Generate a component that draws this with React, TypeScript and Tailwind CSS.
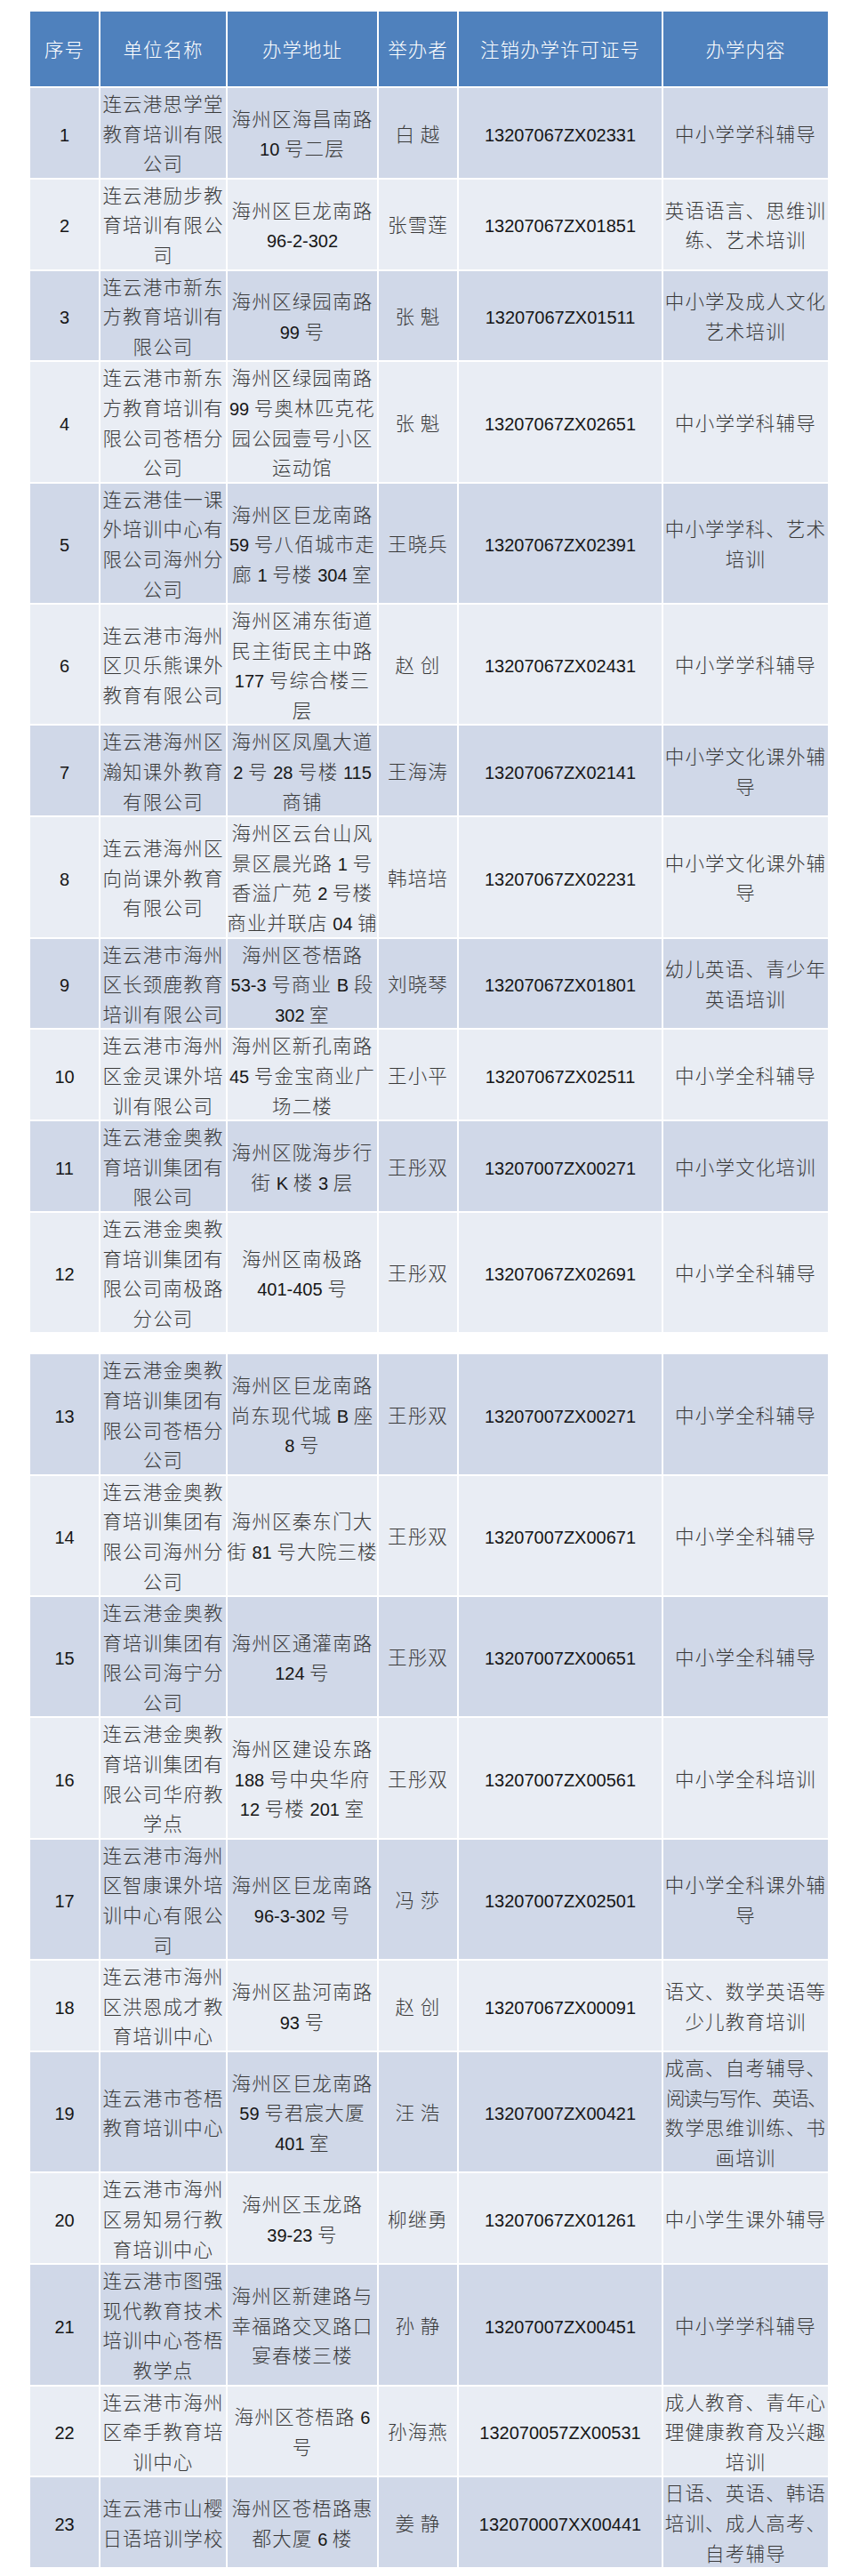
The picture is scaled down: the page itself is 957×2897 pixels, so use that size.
import React from "react";

type Row = {
  n: string;
  name: string;
  addr: string;
  holder: string;
  lic: string;
  content: string;
};

const rowsA: Row[] = [
  { n: "1", name: "连云港思学堂/教育培训有限/公司", addr: "海州区海昌南路/10 号二层", holder: "白 越", lic: "13207067ZX02331", content: "中小学学科辅导" },
  { n: "2", name: "连云港励步教/育培训有限公/司", addr: "海州区巨龙南路/96-2-302", holder: "张雪莲", lic: "13207067ZX01851", content: "英语语言、思维训/练、艺术培训" },
  { n: "3", name: "连云港市新东/方教育培训有/限公司", addr: "海州区绿园南路/99 号", holder: "张 魁", lic: "13207067ZX01511", content: "中小学及成人文化/艺术培训" },
  { n: "4", name: "连云港市新东/方教育培训有/限公司苍梧分/公司", addr: "海州区绿园南路/99 号奥林匹克花/园公园壹号小区/运动馆", holder: "张 魁", lic: "13207067ZX02651", content: "中小学学科辅导" },
  { n: "5", name: "连云港佳一课/外培训中心有/限公司海州分/公司", addr: "海州区巨龙南路/59 号八佰城市走/廊 1 号楼 304 室", holder: "王晓兵", lic: "13207067ZX02391", content: "中小学学科、艺术/培训" },
  { n: "6", name: "连云港市海州/区贝乐熊课外/教育有限公司", addr: "海州区浦东街道/民主街民主中路/177 号综合楼三/层", holder: "赵 创", lic: "13207067ZX02431", content: "中小学学科辅导" },
  { n: "7", name: "连云港海州区/瀚知课外教育/有限公司", addr: "海州区凤凰大道/2 号 28 号楼 115/商铺", holder: "王海涛", lic: "13207067ZX02141", content: "中小学文化课外辅/导" },
  { n: "8", name: "连云港海州区/向尚课外教育/有限公司", addr: "海州区云台山风/景区晨光路 1 号/香溢广苑 2 号楼/商业并联店 04 铺", holder: "韩培培", lic: "13207067ZX02231", content: "中小学文化课外辅/导" },
  { n: "9", name: "连云港市海州/区长颈鹿教育/培训有限公司", addr: "海州区苍梧路/53-3 号商业 B 段/302 室", holder: "刘晓琴", lic: "13207067ZX01801", content: "幼儿英语、青少年/英语培训" },
  { n: "10", name: "连云港市海州/区金灵课外培/训有限公司", addr: "海州区新孔南路/45 号金宝商业广/场二楼", holder: "王小平", lic: "13207067ZX02511", content: "中小学全科辅导" },
  { n: "11", name: "连云港金奥教/育培训集团有/限公司", addr: "海州区陇海步行/街 K 楼 3 层", holder: "王彤双", lic: "13207007ZX00271", content: "中小学文化培训" },
  { n: "12", name: "连云港金奥教/育培训集团有/限公司南极路/分公司", addr: "海州区南极路/401-405 号", holder: "王彤双", lic: "13207067ZX02691", content: "中小学全科辅导" },
];

const rowsB: Row[] = [
  { n: "13", name: "连云港金奥教/育培训集团有/限公司苍梧分/公司", addr: "海州区巨龙南路/尚东现代城 B 座/8 号", holder: "王彤双", lic: "13207007ZX00271", content: "中小学全科辅导" },
  { n: "14", name: "连云港金奥教/育培训集团有/限公司海州分/公司", addr: "海州区秦东门大/街 81 号大院三楼", holder: "王彤双", lic: "13207007ZX00671", content: "中小学全科辅导" },
  { n: "15", name: "连云港金奥教/育培训集团有/限公司海宁分/公司", addr: "海州区通灌南路/124 号", holder: "王彤双", lic: "13207007ZX00651", content: "中小学全科辅导" },
  { n: "16", name: "连云港金奥教/育培训集团有/限公司华府教/学点", addr: "海州区建设东路/188 号中央华府/12 号楼 201 室", holder: "王彤双", lic: "13207007ZX00561", content: "中小学全科培训" },
  { n: "17", name: "连云港市海州/区智康课外培/训中心有限公/司", addr: "海州区巨龙南路/96-3-302 号", holder: "冯 莎", lic: "13207007ZX02501", content: "中小学全科课外辅/导" },
  { n: "18", name: "连云港市海州/区洪恩成才教/育培训中心", addr: "海州区盐河南路/93 号", holder: "赵 创", lic: "13207067ZX00091", content: "语文、数学英语等/少儿教育培训" },
  { n: "19", name: "连云港市苍梧/教育培训中心", addr: "海州区巨龙南路/59 号君宸大厦/401 室", holder: "汪 浩", lic: "13207007ZX00421", content: "成高、自考辅导、/阅读与写作、英语、/数学思维训练、书/画培训" },
  { n: "20", name: "连云港市海州/区易知易行教/育培训中心", addr: "海州区玉龙路/39-23 号", holder: "柳继勇", lic: "13207067ZX01261", content: "中小学生课外辅导" },
  { n: "21", name: "连云港市图强/现代教育技术/培训中心苍梧/教学点", addr: "海州区新建路与/幸福路交叉路口/宴春楼三楼", holder: "孙 静", lic: "13207007ZX00451", content: "中小学学科辅导" },
  { n: "22", name: "连云港市海州/区牵手教育培/训中心", addr: "海州区苍梧路 6/号", holder: "孙海燕", lic: "132070057ZX00531", content: "成人教育、青年心/理健康教育及兴趣/培训" },
  { n: "23", name: "连云港市山樱/日语培训学校", addr: "海州区苍梧路惠/都大厦 6 楼", holder: "姜 静", lic: "132070007XX00441", content: "日语、英语、韩语/培训、成人高考、/自考辅导" },
];

const ASCII = /^[\x20-\x7E]+$/;

function Txt({ s }: { s: string }) {
  const parts = s.split(/([\x20-\x7E]+)/).filter((p) => p.length > 0);
  return (
    <>
      {parts.map((p, i) =>
        ASCII.test(p) ? (
          <span
            key={i}
            className="font-['Liberation_Sans',Arial,sans-serif] text-[20px] leading-none tracking-normal text-[#161616] whitespace-pre"
          >
            {p}
          </span>
        ) : (
          <span key={i}>{p}</span>
        )
      )}
    </>
  );
}

function cjkCount(s: string) {
  let c = 0;
  for (const ch of s) if (!ASCII.test(ch)) c++;
  return c;
}

function Cell({ text, bg }: { text: string; bg: string }) {
  const lines = text.split("/");
  return (
    <div className={`${bg} flex flex-col items-center justify-center text-center`}>
      {lines.map((l, i) => (
        <div
          key={i}
          className={`whitespace-nowrap h-[33.6px] leading-[33.6px] ${
            cjkCount(l) > 8 ? "tracking-[-1.6px]" : "tracking-[1.2px]"
          }`}
        >
          <Txt s={l} />
        </div>
      ))}
    </div>
  );
}

const GRID =
  "grid grid-cols-[77px_141px_168px_88px_228px_185px] gap-[2px]";

function Rows({ rows }: { rows: Row[] }) {
  return (
    <div className={GRID}>
      {rows.map((r) => {
        const bg = parseInt(r.n, 10) % 2 === 1 ? "bg-[#D0D8E8]" : "bg-[#E9EDF4]";
        return (
          <React.Fragment key={r.n}>
            <Cell text={r.n} bg={bg} />
            <Cell text={r.name} bg={bg} />
            <Cell text={r.addr} bg={bg} />
            <Cell text={r.holder} bg={bg} />
            <Cell text={r.lic} bg={bg} />
            <Cell text={r.content} bg={bg} />
          </React.Fragment>
        );
      })}
    </div>
  );
}

const headers = ["序号", "单位名称", "办学地址", "举办者", "注销办学许可证号", "办学内容"];

export default function App() {
  return (
    <div className="w-[957px] min-h-[2897px] bg-white pt-[13px] pl-[34px] font-['Noto_Sans_CJK_SC','Noto_Sans',sans-serif] text-[21.5px] font-light text-[#3a3a3a]">
      <div className={GRID}>
        {headers.map((h) => (
          <div
            key={h}
            className="bg-[#4F81BD] h-[84px] flex items-center justify-center text-white tracking-[1px] whitespace-nowrap"
          >
            {h}
          </div>
        ))}
      </div>
      <div className="mt-[2px]">
        <Rows rows={rowsA} />
      </div>
      <div className="mt-[25px]">
        <Rows rows={rowsB} />
      </div>
    </div>
  );
}
